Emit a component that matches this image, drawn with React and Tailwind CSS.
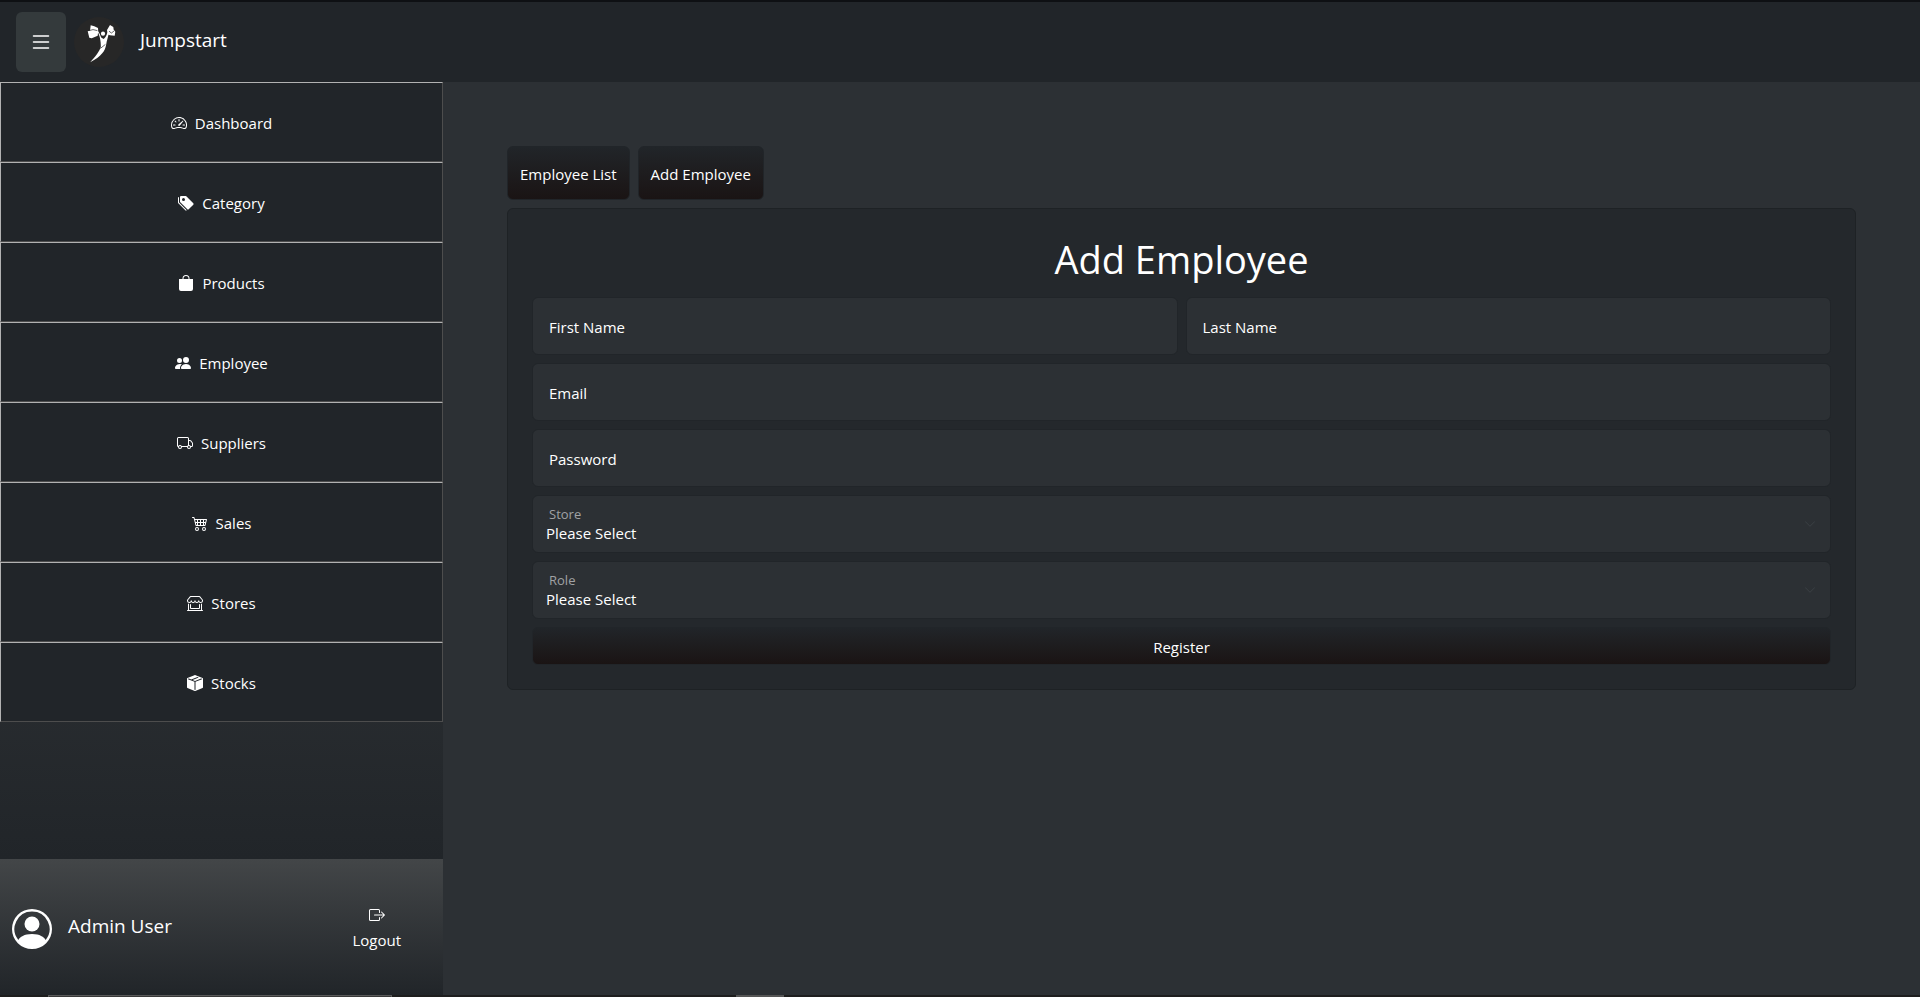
import React from "react";
import {
  BsList,
  BsSpeedometer2,
  BsTagsFill,
  BsBagFill,
  BsPeopleFill,
  BsTruck,
  BsCart4,
  BsShopWindow,
  BsBoxSeamFill,
  BsPersonCircle,
  BsBoxArrowRight,
  BsChevronDown,
} from "react-icons/bs";

const NAV_ITEMS = [
  { label: "Dashboard", Icon: BsSpeedometer2 },
  { label: "Category", Icon: BsTagsFill },
  { label: "Products", Icon: BsBagFill },
  { label: "Employee", Icon: BsPeopleFill },
  { label: "Suppliers", Icon: BsTruck },
  { label: "Sales", Icon: BsCart4 },
  { label: "Stores", Icon: BsShopWindow },
  { label: "Stocks", Icon: BsBoxSeamFill },
];

function Logo() {
  return (
    <svg viewBox="0 0 50 50" className="size-[50px]" aria-hidden="true">
      <circle cx="25" cy="25" r="25" fill="#272727" />
      <g fill="#ffffff">
        <path d="M16.7 8.3 20.3 9.3 24 11 24.2 14 23.7 18.7 17.7 21.3 15.3 20.7 13.7 14.3 16 13.7Z" />
        <path d="M33 13 36 8 39.3 10 39.7 12.7 41.3 14.7 40.7 18.7 36 18.3 33.6 17.6Z" />
        <circle cx="29" cy="16.7" r="2.1" />
        <path d="M22 12.5C25 14 26.2 18 27.2 20.6L29.6 22C31.6 20.6 32.6 18 33.4 15.4L34.8 16C34.2 20 32.6 24 32.2 27.6C31.2 34 27.4 39.6 16.2 45.2C21.6 39.6 25.6 34 26.8 30C27 25 26 17 22 12.5Z" />
      </g>
      <path
        d="M15.5 13.5 19 12.6 23.4 13.6M35 14.2 37.4 16 40 14M26.4 31.4 31.4 27.4"
        fill="none"
        stroke="#272727"
        strokeWidth="0.7"
      />
    </svg>
  );
}

function TextField({ id, label, type = "text" }) {
  return (
    <div className="relative">
      <input
        id={id}
        type={type}
        className="block h-[58px] w-full rounded-md border border-[#212529] bg-[#2c3034] px-4 text-[15px] text-white outline-none"
      />
      <label
        htmlFor={id}
        className="pointer-events-none absolute inset-y-0 left-[17px] flex items-center pt-0.5 text-[15px] text-white"
      >
        {label}
      </label>
    </div>
  );
}

function SelectField({ id, label }) {
  return (
    <div className="relative">
      <select
        id={id}
        className="block h-[58px] w-full appearance-none rounded-md border border-[#212529] bg-[#2c3034] pt-5 pr-10 pb-0.5 pl-[13px] text-[15px] text-white outline-none"
      >
        <option>Please Select</option>
      </select>
      <label
        htmlFor={id}
        className="pointer-events-none absolute top-[9px] left-[17px] text-[13px] leading-5 text-[#a0a2a4]"
      >
        {label}
      </label>
      <BsChevronDown className="pointer-events-none absolute top-[23px] right-[15px] size-3 text-[#3b4045]" />
    </div>
  );
}

export default function App() {
  return (
    <div className="flex min-h-screen flex-col bg-[#2c3034] font-['Open_Sans','Noto_Sans',sans-serif] text-[15px] text-white">
      <header className="flex h-[82px] items-center border-t-2 border-[#0e1013] bg-[#212529] px-4">
        <button
          type="button"
          aria-label="Toggle menu"
          className="flex h-[60px] w-[50px] items-center justify-center rounded-md bg-[#343a3c]"
        >
          <BsList className="size-6" />
        </button>
        <a href="#home" className="ml-2 flex items-center gap-4">
          <Logo />
          <span className="pb-1 text-[19px]">Jumpstart</span>
        </a>
      </header>

      <div className="flex flex-1">
        <aside className="flex w-[443px] shrink-0 flex-col">
          <nav className="flex flex-1 flex-col bg-linear-to-b from-[#434648] to-[#212529]">
            {NAV_ITEMS.map(({ label, Icon }) => (
              <button
                key={label}
                type="button"
                className="flex h-20 items-center justify-center gap-2 border border-t-[#b2b2b2] border-r-[#4d4d4d] border-b-[#4d4d4d] border-l-[#b2b2b2] bg-[#212529] pt-0.5"
              >
                <Icon className="size-4" />
                {label}
              </button>
            ))}
          </nav>
          <div className="flex h-[136px] items-center justify-between bg-linear-to-b from-[#434648] to-[#212529] pt-1 pr-[42px] pl-3">
            <div className="flex items-center gap-4">
              <BsPersonCircle className="size-10" />
              <span className="pb-1.5 text-[19px]">Admin User</span>
            </div>
            <button type="button" className="flex flex-col items-center gap-1.5">
              <BsBoxArrowRight className="size-4" />
              Logout
            </button>
          </div>
        </aside>

        <main className="flex-1 p-16">
          <div className="mb-2 flex gap-2">
            <button
              type="button"
              className="h-[54px] rounded-md border border-[#212529] bg-linear-to-b from-[#212529] to-[#1a1414] px-3 pt-0.5"
            >
              Employee List
            </button>
            <button
              type="button"
              className="h-[54px] rounded-md border border-[#212529] bg-linear-to-b from-[#212529] to-[#1a1414] px-3 pt-0.5"
            >
              Add Employee
            </button>
          </div>

          <section className="rounded-md border border-[#1e2225] bg-[#24282c] p-6">
            <h1 className="pb-3 text-center text-[38px] leading-[52px]">Add Employee</h1>
            <form className="flex flex-col gap-2">
              <div className="grid grid-cols-2 gap-2">
                <TextField id="first-name" label="First Name" />
                <TextField id="last-name" label="Last Name" />
              </div>
              <TextField id="email" label="Email" type="email" />
              <TextField id="password" label="Password" type="password" />
              <SelectField id="store" label="Store" />
              <SelectField id="role" label="Role" />
              <button
                type="button"
                className="h-[38px] rounded-md border border-[#212529] bg-linear-to-b from-[#212529] to-[#1a1414] pt-0.5"
              >
                Register
              </button>
            </form>
          </section>
        </main>
      </div>

      <div className="flex h-0.5 bg-[#1e1e1e] pl-12">
        <div className="w-[344px] border border-b-0 border-[#5a5a5a] bg-[#3a3a3a]" />
        <div className="ml-[344px] w-12 bg-[#555555]" />
      </div>
    </div>
  );
}
